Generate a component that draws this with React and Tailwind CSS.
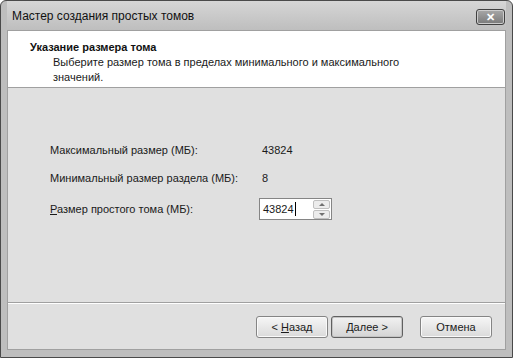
function Spin() {
  return (
    <div className="flex h-[21px] w-[18px] flex-col justify-between py-px pr-px">
      <div className="flex h-[9px] items-center justify-center rounded-[2px] border border-[#c0c0c0] bg-[#ececec]">
        <div className="h-0 w-0 border-x-[3px] border-b-[3px] border-x-transparent border-b-[#707070]" />
      </div>
      <div className="flex h-[9px] items-center justify-center rounded-[2px] border border-[#c0c0c0] bg-[#ececec]">
        <div className="h-0 w-0 border-x-[3px] border-t-[3px] border-x-transparent border-t-[#707070]" />
      </div>
    </div>
  )
}

function Btn({ children, primary }) {
  return (
    <button
      className={
        primary
          ? 'flex h-[22px] w-[72px] items-center justify-center rounded-[3px] border border-[#606060] bg-gradient-to-b from-[#f2f2f2] to-[#d4d4d4] shadow-[inset_0_0_0_1px_#c4c4c4]'
          : 'flex h-[22px] w-[72px] items-center justify-center rounded-[3px] border border-[#858585] bg-gradient-to-b from-[#f6f6f6] to-[#dadada] shadow-[inset_0_0_0_1px_#fafafa]'
      }
    >
      {children}
    </button>
  )
}

export default function App() {
  return (
    <div className="h-[358px] w-[513px] bg-white font-['Liberation_Sans',sans-serif] text-[11px] text-[#1a1a1a]">
      <div className="flex h-full w-full flex-col rounded-t-[6px] border border-[#4a4a4a] bg-[#bebebe] px-[6px] pb-[7px]">
        <div className="flex h-[29px] items-center justify-between bg-gradient-to-b from-[#d6d6d6] to-[#bebebe] pl-[5px] pr-[1px] pt-[1px]">
          <span className="text-[12px] text-[#111]">Мастер создания простых томов</span>
          <div className="mt-[2px] flex h-[16px] w-[29px] items-center justify-center rounded-[3px] border border-[#404040] bg-gradient-to-b from-[#a8a8a8] to-[#7a7a7a] shadow-[inset_0_0_0_1px_#cccccc]">
            <span className="text-[11px] font-bold leading-none text-white">✕</span>
          </div>
        </div>
        <div className="flex flex-1 flex-col border border-[#a0a0a0] bg-[#e0e0e0]">
          <div className="h-[57px] border-b border-[#a0a0a0] bg-white pl-[22px] pt-[8px]">
            <div className="text-[11px] font-bold leading-[16px] text-[#111]">Указание размера тома</div>
            <div className="pl-[23px] leading-[15px]">
              Выберите размер тома в пределах минимального и максимального
              <br />
              значений.
            </div>
          </div>
          <div className="flex flex-1 flex-col pl-[42px] pt-[55px]">
            <div className="grid grid-cols-[212px_auto] gap-y-[14px] leading-[14px]">
              <span>Максимальный размер (МБ):</span>
              <span>43824</span>
              <span>Минимальный размер раздела (МБ):</span>
              <span>8</span>
            </div>
            <div className="mt-[13px] flex items-center">
              <span className="w-[209px]">
                <span className="underline">Р</span>азмер простого тома (МБ):
              </span>
              <div className="flex h-[22px] w-[73px] items-center justify-between border border-[#858585] bg-white">
                <span className="flex items-center pl-[3px] text-[11px]">
                  43824<span className="ml-px inline-block h-[14px] w-px bg-black" />
                </span>
                <Spin />
              </div>
            </div>
          </div>
          <div className="h-[47px] border-t border-[#a0a0a0] shadow-[inset_0_1px_0_#ffffff]">
            <div className="flex items-center justify-end gap-[3px] pr-[13px] pt-[13px]">
              <Btn>
                &lt; <span className="ml-[3px] underline">Н</span>азад
              </Btn>
              <Btn primary>
                <span className="underline">Д</span>алее &gt;
              </Btn>
              <div className="w-[11px]" />
              <Btn>Отмена</Btn>
            </div>
          </div>
        </div>
      </div>
    </div>
  )
}
